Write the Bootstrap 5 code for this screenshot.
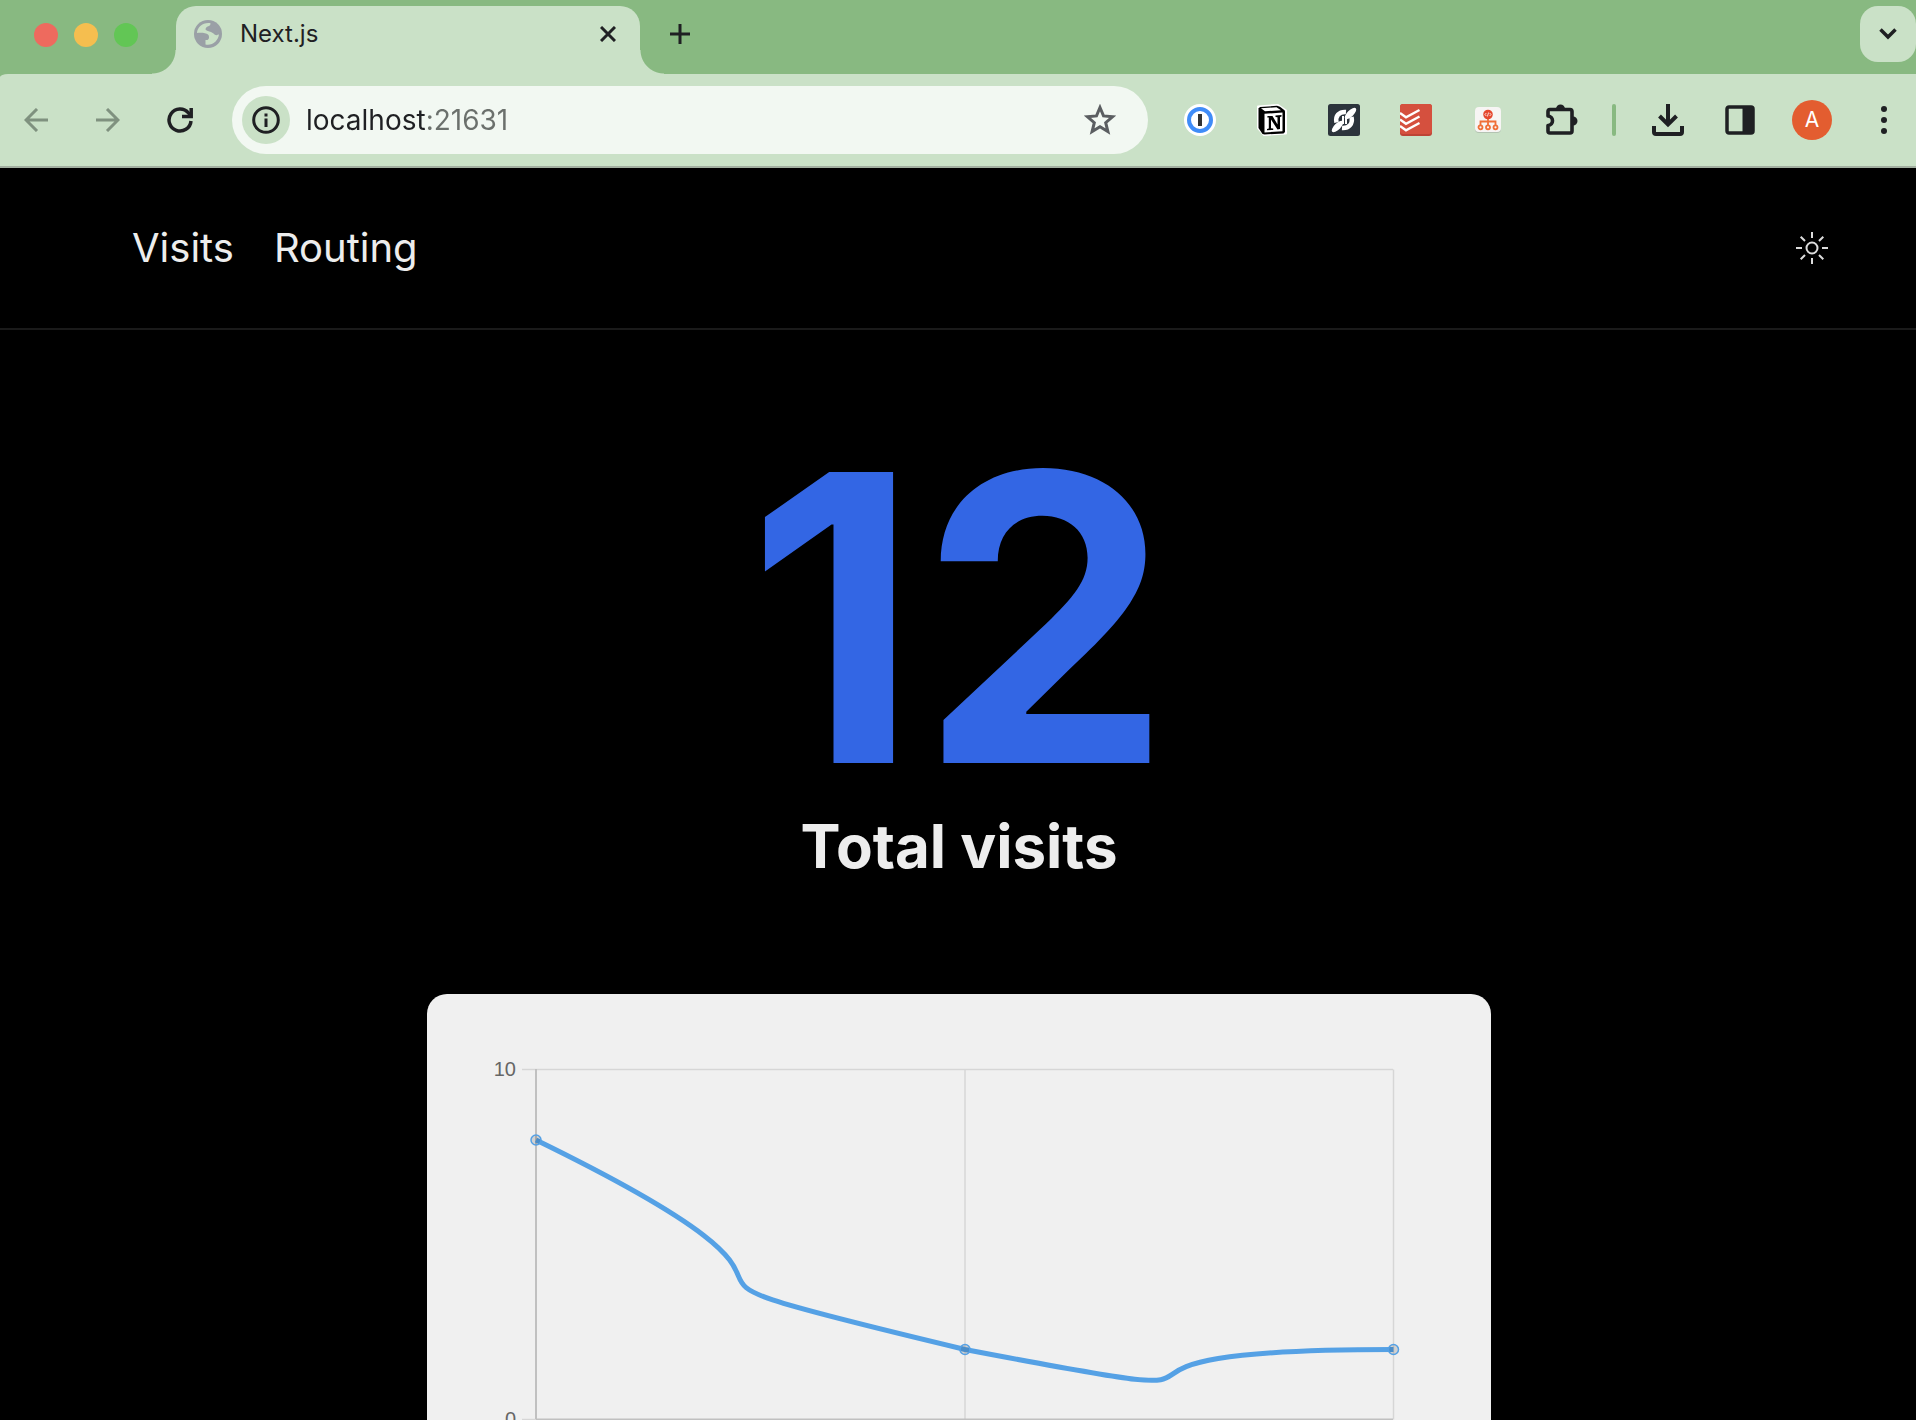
<!DOCTYPE html>
<html lang="en" data-bs-theme="dark">
<head>
<meta charset="utf-8">
<meta name="viewport" content="width=device-width, initial-scale=1">
<title>Next.js</title>
<link href="https://cdn.jsdelivr.net/npm/bootstrap@5.3.0/dist/css/bootstrap.min.css" rel="stylesheet">
<style>
  :root { --strip: #88b981; --bar: #cae1c7; --ink: #1f2023; }
  body { background: #000; color: #ededed; font-family: Inter, "Liberation Sans", sans-serif; }
  svg { display: block; flex: none; }
  .plain { border: 0; background: none; padding: 0; color: inherit; }
  .browser { color: var(--ink); background: var(--strip); }
  .tab-strip { height: 74px; padding-top: 6px; }
  .lights { width: 176px; gap: 16px; padding-left: 34px; height: 58px; }
  .light { width: 24px; height: 24px; border-radius: 50%; }
  .light-close { background: #ee6a5e; }
  .light-min { background: #f5be4f; }
  .light-max { background: #62c655; }
  .page-tab { width: 464px; height: 68px; background: var(--bar); border-radius: 20px 20px 0 0; padding: 0 24px 12px 18px; }
  .page-tab::before, .page-tab::after { content: ""; position: absolute; bottom: 0; width: 24px; height: 24px; }
  .page-tab::before { right: 100%; background: radial-gradient(circle at 0 0, transparent 23px, var(--bar) 24px); }
  .page-tab::after { left: 100%; background: radial-gradient(circle at 100% 0, transparent 23px, var(--bar) 24px); }
  .tab-title { font-size: 24px; line-height: 28px; margin-left: 18px; }
  .new-tab { width: 80px; height: 56px; }
  .tab-search { width: 56px; height: 56px; border-radius: 18px; background: var(--bar); }
  .tools { background: var(--bar); height: 94px; border-bottom: 2px solid #a2afa0; border-top-left-radius: 8px 3px; }
  .tool { width: 72px; height: 72px; }
  .tool-last { width: 64px; }
  .tools-end { margin-right: 4px; }
  .faded { color: #7f917f; }
  .address { height: 68px; border-radius: 34px; background: #f2f8f2; margin: 0 16px; padding: 0 32px 0 10px; }
  .site-info { width: 48px; height: 48px; border-radius: 50%; background: var(--bar); }
  .url { font-size: 28px; line-height: 36px; margin-left: 16px; outline: 0; color: #6b706c;
         background: linear-gradient(90deg, var(--ink) 120px, #6b706c 120px);
         -webkit-background-clip: text; background-clip: text; -webkit-text-fill-color: transparent; }
  .divider { width: 36px; }
  .divider span { width: 4px; height: 32px; border-radius: 2px; background: var(--strip); }
  .avatar { width: 40px; height: 40px; border-radius: 50%; background: #e35d30; color: #fff; font-size: 21px; line-height: 40px; }
  .site-nav { height: 162px; border-bottom: 2px solid #1a1a1a; padding: 0 88px 0 132px; font-size: 40px; line-height: 48px; gap: 40px; }
  .site-nav a { color: #ededed; text-decoration: none; }
  .sun { color: #dcdcdc; }
  .content { padding-left: 2px; }
  .total { color: #3366e4; font-size: 400px; line-height: 400px; font-weight: 700; font-kerning: none; margin-top: 87px; }
  .caption-line { color: #ededed; font-size: 60px; line-height: 58px; font-weight: 700; margin: 0 0 119px; }
  .chart-card { width: 100%; max-width: 1064px; background: #f0f0f0; border-radius: 20px; }
  .chart-card text { font-family: "Liberation Sans", sans-serif; font-size: 20px; fill: #666; text-anchor: end; }
</style>
<script src="https://cdn.jsdelivr.net/npm/bootstrap@5.3.0/dist/js/bootstrap.bundle.min.js"></script>
</head>
<body>
<div class="vh-100 overflow-hidden d-flex flex-column">
  <header class="browser flex-shrink-0">
    <div class="tab-strip d-flex">
      <div class="lights d-flex align-items-center">
        <button class="plain light light-close" aria-label="Close window"></button>
        <button class="plain light light-min" aria-label="Minimize window"></button>
        <button class="plain light light-max" aria-label="Zoom window"></button>
      </div>
      <div class="page-tab position-relative d-flex align-items-center">
        <svg width="28" height="28" viewBox="0 0 28 28"><circle cx="14" cy="14" r="14" fill="#9aa0a6"/><path fill="#cae1c7" d="M16.500 3.200C9 2 3.200 7.500 3 13c3-.5 9-.5 11 1.500 1.500 1.500 1.500 4.500-.5 5.500h-2v4.500C18 26 24.500 21 25 14c-1 1.500-3 1.500-4.500.5-1-1-1.500-1.500-3.500-2.500-2.500-1-4-1-5.500-2.500 0-2 1.500-3 3.500-3.500 1-.5 1.500-1.500 1.500-2.800z"/></svg>
        <span class="tab-title">Next.js</span>
        <button class="plain ms-auto" aria-label="Close tab"><svg width="16" height="16" viewBox="0 0 16 16" fill="none" stroke="currentColor" stroke-width="3"><path d="M1 1l14 14M15 1L1 15"/></svg></button>
      </div>
      <button class="plain new-tab d-flex align-items-center justify-content-center" aria-label="New tab"><svg width="20" height="20" viewBox="0 0 20 20" stroke="currentColor" stroke-width="3"><path d="M10 0v20M0 10h20"/></svg></button>
      <button class="plain tab-search d-flex align-items-center justify-content-center ms-auto" aria-label="Search tabs"><svg width="18" height="12" viewBox="0 0 18 12" fill="none" stroke="currentColor" stroke-width="3.500"><path d="M1.500 1.500L9 9l7.500-7.500"/></svg></button>
    </div>
    <div class="tools d-flex align-items-center">
      <button class="plain tool faded d-flex align-items-center justify-content-center flex-shrink-0" aria-label="Back"><svg width="24" height="24" viewBox="0 0 24 24" fill="none" stroke="currentColor" stroke-width="3"><path d="M24 12H2M13 1L2 12l11 11"/></svg></button>
      <button class="plain tool faded d-flex align-items-center justify-content-center flex-shrink-0" aria-label="Forward"><svg width="24" height="24" viewBox="0 0 24 24" fill="none" stroke="currentColor" stroke-width="3"><path d="M0 12h22M11 1l11 11-11 11"/></svg></button>
      <button class="plain tool d-flex align-items-center justify-content-center flex-shrink-0" aria-label="Reload"><svg width="26" height="26" viewBox="0 0 26 26" fill="none" stroke="currentColor" stroke-width="3.500"><path d="M24 14a11 11 0 1 1-2.500-8L24 9"/><path d="M24.200 1v8.500H15"/></svg></button>
      <div class="address d-flex align-items-center flex-grow-1">
        <button class="plain site-info d-flex align-items-center justify-content-center flex-shrink-0" aria-label="Site information"><svg width="28" height="28" viewBox="0 0 28 28"><circle cx="14" cy="14" r="12.300" fill="none" stroke="currentColor" stroke-width="3"/><path d="M12.500 12.500h3V21h-3zM12.500 7.500h3v3h-3z" fill="currentColor"/></svg></button>
        <input class="plain url flex-grow-1" type="text" aria-label="Address" value="localhost:21631">
        <button class="plain" aria-label="Bookmark this page"><svg width="32" height="32" viewBox="0 0 32 32" fill="none" stroke="#5b5e61" stroke-width="3"><path d="M16 3.500l3.500 8.400 9.200.8-7 6 2.200 8.900-7.900-4.800-7.900 4.800 2.200-8.900-7-6 9.200-.8z"/></svg></button>
      </div>
      <button class="plain tool d-flex align-items-center justify-content-center flex-shrink-0" aria-label="Password manager"><svg width="32" height="32" viewBox="0 0 32 32"><circle cx="16" cy="16" r="16" fill="#fff"/><circle cx="16" cy="16" r="11" fill="none" stroke="#3f8cf8" stroke-width="4"/><rect x="14" y="10" width="4" height="12" fill="#333"/></svg></button>
      <button class="plain tool d-flex align-items-center justify-content-center flex-shrink-0" aria-label="Notes clipper"><svg width="32" height="32" viewBox="0 0 32 32"><path d="M2 2.500L22 1l8 5.500V29.500L8 31l-6-7z" fill="#fff" stroke="#fff" stroke-width="2" stroke-linejoin="round"/><path d="M2.500 4.500L4 3l17-1.200 3 .9 4.500 3.600.5 1V28l-1.500 1.500L8.500 30.500 6.500 30l-4-6z"/><path d="M5 4.300l15.500-1.100 4.500 3L9 7.300zM8.500 9.800l18-1.300v18.700l-18 1.200z" fill="#fff"/><path d="M11.500 12h5l5 8.500v-7.300l-2-.3V11.500l6-.4v1.400l-1.500.6v12l-2.500.3-6.500-10v8.800l2.200.4v1.300l-6.200.4v-1.400l1.800-.5V13.600l-1.500-.2z"/></svg></button>
      <button class="plain tool d-flex align-items-center justify-content-center flex-shrink-0" aria-label="Link extension"><svg width="32" height="32" viewBox="0 0 32 32"><rect width="32" height="32" rx="2.500" fill="#2c343c"/><g fill="none" stroke="#fff" stroke-width="4.500"><path d="M18 8C11 7.500 7 12 8.500 18.500M14 24c7 .5 11-4 9.500-11"/></g><ellipse cx="22.500" cy="9.500" rx="7.500" ry="3.200" transform="rotate(-45 22.500 9.500)" fill="#fff"/><ellipse cx="9.500" cy="22.500" rx="7.500" ry="3.200" transform="rotate(-45 9.500 22.500)" fill="#fff"/><path d="M15 12v8M18 12v8" fill="none" stroke="#fff" stroke-width="2"/></svg></button>
      <button class="plain tool d-flex align-items-center justify-content-center flex-shrink-0" aria-label="Task list"><svg width="32" height="32" viewBox="0 0 32 32"><rect width="32" height="32" rx="3" fill="#bd4335"/><rect width="32" height="30" rx="3" fill="#d5503e"/><path d="M0 9l6 4.300L19.500 6M0 15.500l6 4.300 13.500-7.300M0 22l6 4.300L19.500 19" fill="none" stroke="#fff" stroke-width="2.300"/></svg></button>
      <button class="plain tool d-flex align-items-center justify-content-center flex-shrink-0" aria-label="Code tree"><svg width="28" height="28" viewBox="0 0 28 28"><rect x="1" y="2" width="26" height="25" rx="4" fill="#b3c3b2"/><rect x="1" y="1" width="26" height="25" rx="4" fill="#f7f5f4"/><g fill="none" stroke="#f07038" stroke-width="1.800"><path d="M14 13v6M6.500 19v-3.500h15V19"/><circle cx="6.500" cy="21.300" r="2"/><circle cx="14" cy="21.300" r="2"/><circle cx="21.500" cy="21.300" r="2"/></g><circle cx="14" cy="8.500" r="4.800" fill="#e5482f"/><path d="M12.300 7L11 8.500l1.300 1.500M15.700 7L17 8.500 15.700 10M14.600 6.500l-1.200 4" fill="none" stroke="#fff" stroke-width=".8"/></svg></button>
      <button class="plain tool d-flex align-items-center justify-content-center flex-shrink-0" aria-label="Extensions"><svg width="36" height="36" viewBox="0 0 36 36"><path d="M8 7.500h20q2 0 2 2V29q0 2-2 2H8q-2 0-2-2v-5.500c6-.5 6-9 0-9.500V9.500q0-2 2-2z" fill="none" stroke="currentColor" stroke-width="3.600" stroke-linejoin="round"/><path d="M14 7a4.500 4.500 0 0 1 9 0zM31 14.500a4.500 4.500 0 0 1 0 9z" fill="currentColor"/></svg></button>
      <div class="divider d-flex justify-content-center flex-shrink-0"><span></span></div>
      <button class="plain tool d-flex align-items-center justify-content-center flex-shrink-0" aria-label="Downloads"><svg width="32" height="32" viewBox="0 0 32 32" fill="none" stroke="currentColor" stroke-width="4"><path d="M16 0v20M7.500 12l8.500 8.500 8.500-8.500M2 22v6q0 2 2 2h24q2 0 2-2v-6"/></svg></button>
      <button class="plain tool d-flex align-items-center justify-content-center flex-shrink-0" aria-label="Side panel"><svg width="30" height="30" viewBox="0 0 30 30"><rect x="2" y="2" width="26" height="26" rx="2" fill="none" stroke="currentColor" stroke-width="3.500"/><path d="M17.500 2H28v26H17.500z" fill="currentColor"/></svg></button>
      <button class="plain tool d-flex align-items-center justify-content-center flex-shrink-0" aria-label="Profile"><span class="avatar">A</span></button>
      <button class="plain tool tool-last tools-end ps-2 d-flex align-items-center justify-content-center flex-shrink-0" aria-label="Menu"><svg width="6" height="28" viewBox="0 0 6 28" fill="currentColor"><circle cx="3" cy="3" r="3"/><circle cx="3" cy="14" r="3"/><circle cx="3" cy="25" r="3"/></svg></button>
    </div>
  </header>

  <nav class="site-nav d-flex align-items-center flex-shrink-0">
    <a href="#visits">Visits</a>
    <a href="#routing">Routing</a>
    <button class="plain sun ms-auto" aria-label="Toggle theme"><svg width="32" height="32" viewBox="0 0 32 32" fill="none" stroke="currentColor" stroke-width="2"><circle cx="16" cy="16" r="5.500"/><path d="M16 0v6M16 26v6M0 16h6M26 16h6M4.700 4.700L9 9M23 23l4.300 4.300M27.300 4.700L23 9M9 23l-4.300 4.300"/></svg></button>
  </nav>

  <main class="content d-flex flex-column align-items-center flex-grow-1 overflow-hidden" id="visits">
    <div class="total">12</div>
    <h1 class="caption-line">Total visits</h1>
    <div class="chart-card flex-shrink-0">
      <svg class="w-100 h-auto" viewBox="0 0 1064 500" role="img" aria-label="Visits over time">
        <g fill="none" stroke="#d6d6d6" stroke-width="1.500">
          <path d="M95 75.500h871M538 75.500v350M966.500 75.500v350M95 425.500h14"/>
        </g>
        <path d="M109 75v350M109 425.500h857" fill="none" stroke="#c0c0c0" stroke-width="2"/>
        <text x="89" y="82">10</text>
        <text x="89" y="432">0</text>
        <path d="M109 146C495 334.500 122 256 538 355.500C903 425 578 355.500 966.500 355.500" fill="none" stroke="#55a1e5" stroke-width="5"/>
        <g fill="#000" fill-opacity=".12" stroke="#55a1e5" stroke-width="1.500"><circle cx="109" cy="146" r="5"/><circle cx="538" cy="355.500" r="5"/><circle cx="966.500" cy="355.500" r="5"/></g>
      </svg>
    </div>
  </main>
</div>
</body>
</html>
